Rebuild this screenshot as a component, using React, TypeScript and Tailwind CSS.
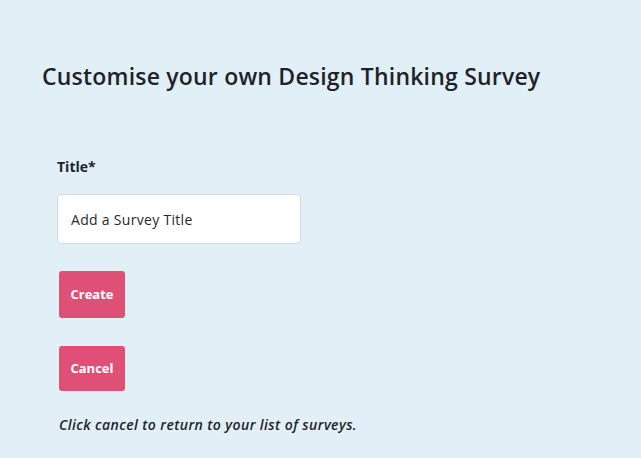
const App = () => {
  return (
    <div
      className="min-h-[458px] w-full bg-[#e1f0f7] text-[#1f2329]"
      style={{ fontFamily: "'Open Sans', Lato, sans-serif" }}
    >
      <div className="px-[42px] pt-[60px]">
        <h1 className="text-[23px] font-semibold leading-[32px] tracking-[0.2px]">
          Customise your own Design Thinking Survey
        </h1>
      </div>
      <div className="pl-[57px] pt-[65px]">
        <label className="block text-[14px] font-bold leading-[20px]">Title*</label>
        <input
          type="text"
          placeholder="Add a Survey Title"
          className="mt-[17px] block h-[50px] w-[244px] rounded-[4px] border border-[#d6d9dc] bg-white px-[13px] text-[14px] tracking-[0.3px] text-[#222] placeholder:text-[#2a2a2a] outline-none"
        />
        <div className="flex flex-col items-start gap-[28px] pl-[2px] pt-[27px]">
          <button className="h-[47px] w-[66px] rounded-[3px] bg-[#e05076] text-[13px] font-bold text-white">
            Create
          </button>
          <button className="h-[45px] w-[66px] rounded-[3px] bg-[#e05076] text-[13px] font-bold text-white">
            Cancel
          </button>
        </div>
        <p className="pl-[2px] pt-[23px] text-[14px] italic font-semibold tracking-[0.4px] text-[#1f2329]">
          Click cancel to return to your list of surveys.
        </p>
      </div>
    </div>
  );
};

export default App;
